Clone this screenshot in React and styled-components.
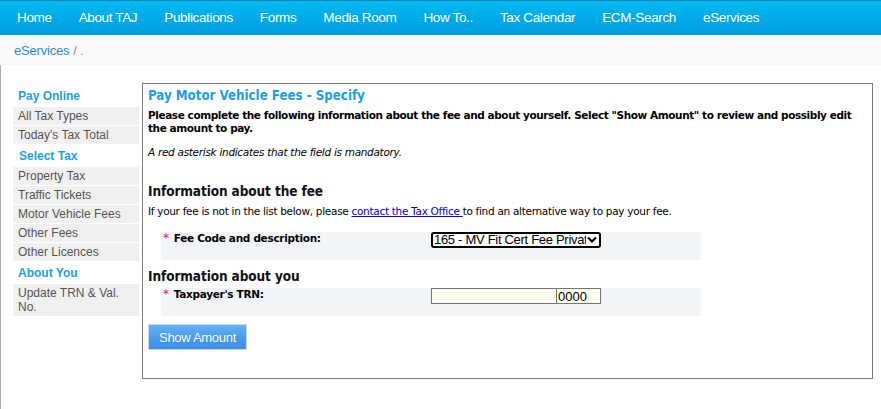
import React from 'react'
import styled, { createGlobalStyle } from 'styled-components'

const GlobalStyle = createGlobalStyle`
  html, body {
    margin: 0;
    padding: 0;
    background: #fff;
  }
  body {
    font-family: "DejaVu Sans", Verdana, sans-serif;
    color: #000;
  }
`

const NavBar = styled.nav`
  height: 35px;
  display: flex;
  align-items: center;
  padding-left: 17px;
  box-sizing: border-box;
  border-top: 1px solid #0a86c4;
  background: linear-gradient(to bottom, #00b8f0 0%, #00abe8 50%, #009ddf 100%);
`

const NavItem = styled.a`
  font-family: "Liberation Sans", Arial, sans-serif;
  font-size: 13.5px;
  letter-spacing: -0.35px;
  color: #fff;
  text-decoration: none;
  margin-right: 27px;
  line-height: 16px;
`

const Crumbs = styled.div`
  height: 30px;
  background: #f9f9f9;
  display: flex;
  align-items: center;
  padding-left: 14px;
  font-family: "Liberation Sans", Arial, sans-serif;
  font-size: 13px;
  letter-spacing: -0.2px;
`

const CrumbLink = styled.a`
  color: #2a8dd6;
  text-decoration: none;
`

const CrumbRest = styled.span`
  color: #888;
  margin-left: 4px;
`

const Page = styled.div`
  display: flex;
  gap: 3px;
  padding: 18px 8px 30px 12px;
  border-left: 1px solid #aaa;
`

const Sidebar = styled.aside`
  width: 126px;
  flex: none;
  padding-top: 2px;
  font-family: "Liberation Sans", Arial, sans-serif;
  font-size: 12px;
`

const SideHeading = styled.div`
  padding: 4px 5px 4px ${props => props.$indent || 5}px;
  line-height: 14px;
  font-weight: bold;
  color: #1aa2e6;
`

const SideItem = styled.a`
  display: block;
  padding: 2px 5px;
  line-height: 14px;
  background: #f0f0f0;
  color: #555;
  margin-bottom: 1px;
  text-decoration: none;
`

const Box = styled.section`
  flex: 1;
  border: 1px solid #7a7a7a;
  padding: 4px 6px 28px 5px;
  font-size: 10.5px;
  letter-spacing: -0.3px;
`

const Title = styled.h2`
  margin: 0;
  font-family: "DejaVu Sans Condensed", "DejaVu Sans", sans-serif;
  font-size: 13.2px;
  line-height: 16px;
  letter-spacing: 0;
  font-weight: bold;
  color: #1ba1e2;
`

const Lead = styled.p`
  margin: 5px 0 0;
  font-weight: bold;
  line-height: 13px;
  letter-spacing: -0.42px;
`

const Note = styled.p`
  margin: 11px 0 0;
  font-style: italic;
  line-height: 13px;
`

const Section = styled.h3`
  margin: ${props => props.$top}px 0 0;
  font-family: "DejaVu Sans Condensed", "DejaVu Sans", sans-serif;
  font-size: 13.5px;
  line-height: 18px;
  letter-spacing: -0.1px;
  font-weight: bold;
  color: #111;
`

const Help = styled.p`
  margin: 5px 0 0;
  line-height: 13px;
`

const Link = styled.a`
  color: #0000ee;
  text-decoration: underline;
`

const Row = styled.div`
  margin: ${props => props.$top}px 0 0 13px;
  width: 540px;
  height: 28px;
  background: #f1f5f8;
  display: flex;
  align-items: flex-start;
`

const Label = styled.div`
  width: 270px;
  padding-left: 2px;
  box-sizing: border-box;
  line-height: 13px;
  font-weight: bold;
  display: flex;
  gap: 5px;
`

const Star = styled.span`
  color: #e8163c;
  font-weight: normal;
  font-size: 12px;
`

const SelectWrap = styled.div`
  position: relative;
  width: 170px;
  height: 16px;
`

const Select = styled.select`
  appearance: none;
  width: 100%;
  height: 16px;
  box-sizing: border-box;
  border: 2px solid #000;
  border-radius: 3px;
  background: #fff;
  padding: 0 13px 0 1px;
  font-family: "Liberation Sans", Arial, sans-serif;
  font-size: 13px;
  letter-spacing: -0.3px;
  line-height: 12px;
  color: #000;
  overflow: hidden;
  outline: none;
`

const Chevron = styled.svg`
  position: absolute;
  right: 4px;
  top: 4px;
  pointer-events: none;
`

const Field = styled.input`
  width: ${props => props.$w}px;
  height: 16px;
  box-sizing: border-box;
  border: 1px solid #767676;
  border-left-width: ${props => props.$joined ? 0 : 1}px;
  background: #fffff0;
  padding: 0 1px;
  margin: 0;
  font-family: "Liberation Sans", Arial, sans-serif;
  font-size: 13px;
  letter-spacing: 0;
  color: #000;
  outline: none;
`

const Button = styled.button`
  margin-top: 8px;
  width: 99px;
  height: 26px;
  border: 1px solid #cfd8e0;
  background: linear-gradient(to bottom, #60b1f7 0%, #4a9df0 50%, #3d8fe9 100%);
  color: #fff;
  font-family: "Liberation Sans", Arial, sans-serif;
  font-size: 13px;
  letter-spacing: -0.3px;
  text-shadow: 0 0 1px rgba(0, 0, 0, 0.2);
  cursor: pointer;
  padding: 0;
`

const navItems = [
  'Home', 'About TAJ', 'Publications', 'Forms', 'Media Room',
  'How To..', 'Tax Calendar', 'ECM-Search', 'eServices',
]

const App = () => {
  return (
    <>
      <GlobalStyle />
      <NavBar>
        {navItems.map(item => <NavItem key={item} href="#">{item}</NavItem>)}
      </NavBar>
      <Crumbs>
        <CrumbLink href="#">eServices</CrumbLink>
        <CrumbRest>/ .</CrumbRest>
      </Crumbs>
      <Page>
        <Sidebar>
          <SideHeading>Pay Online</SideHeading>
          <SideItem href="#">All Tax Types</SideItem>
          <SideItem href="#">Today's Tax Total</SideItem>
          <SideHeading $indent={6}>Select Tax</SideHeading>
          <SideItem href="#">Property Tax</SideItem>
          <SideItem href="#">Traffic Tickets</SideItem>
          <SideItem href="#">Motor Vehicle Fees</SideItem>
          <SideItem href="#">Other Fees</SideItem>
          <SideItem href="#">Other Licences</SideItem>
          <SideHeading>About You</SideHeading>
          <SideItem href="#">Update TRN &amp; Val. No.</SideItem>
        </Sidebar>
        <Box>
          <Title>Pay Motor Vehicle Fees - Specify</Title>
          <Lead>
            Please complete the following information about the fee and about yourself. Select "Show Amount" to review and possibly edit the amount to pay.
          </Lead>
          <Note>A red asterisk indicates that the field is mandatory.</Note>

          <Section $top={23}>Information about the fee</Section>
          <Help>
            If your fee is not in the list below, please <Link href="#">contact the Tax Office </Link>to find an alternative way to pay your fee.
          </Help>
          <Row $top={14}>
            <Label><Star>*</Star>Fee Code and description:</Label>
            <SelectWrap>
              <Select defaultValue="165">
                <option value="165">165 - MV Fit Cert Fee Private</option>
              </Select>
              <Chevron width="10" height="8" viewBox="0 0 10 8">
                <path d="M1 1.5 L5 5.5 L9 1.5" fill="none" stroke="#000" strokeWidth="2.2" />
              </Chevron>
            </SelectWrap>
          </Row>

          <Section $top={7}>Information about you</Section>
          <Row $top={3}>
            <Label><Star>*</Star>Taxpayer's TRN:</Label>
            <Field $w={126} defaultValue="" />
            <Field $w={44} $joined defaultValue="0000" />
          </Row>

          <Button>Show Amount</Button>
        </Box>
      </Page>
    </>
  )
}

export default App
